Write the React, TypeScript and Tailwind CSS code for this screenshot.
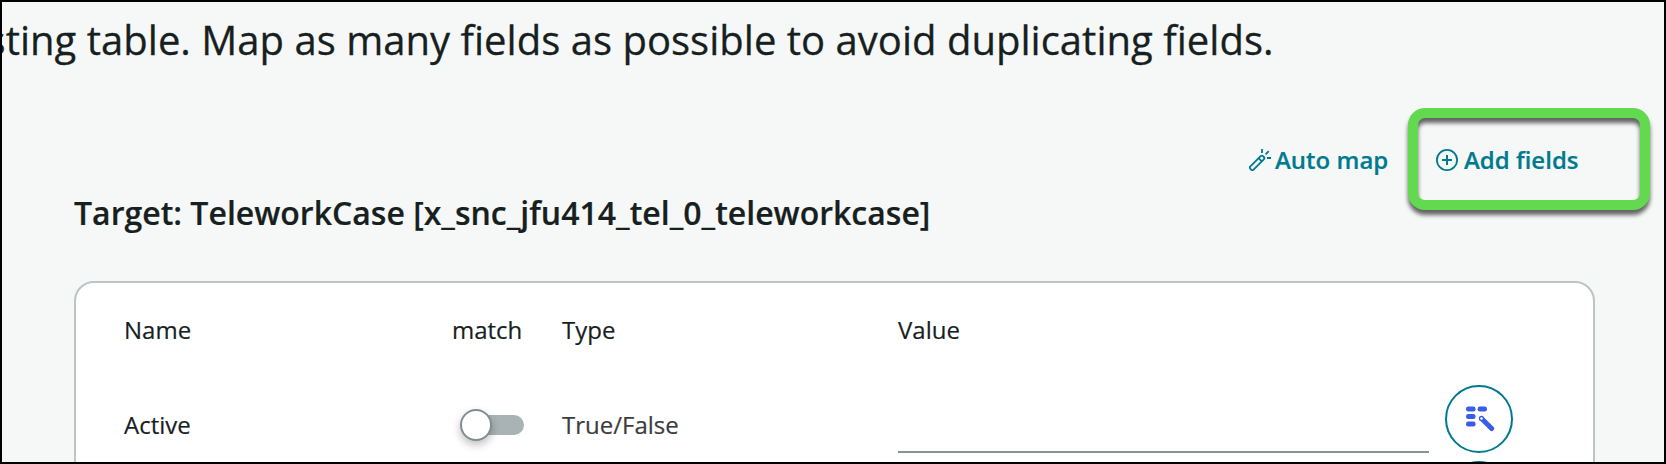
import type { ReactNode } from "react";

function WandIcon() {
  return (
    <svg className="size-[22px] shrink-0" viewBox="0 0 22 22" fill="none" stroke="currentColor" strokeWidth="1.8">
      <path d="M1.4 17.4 11.6 7.2a1.7 1.7 0 0 1 2.4 0l.8.8a1.7 1.7 0 0 1 0 2.4L4.6 20.6a1.7 1.7 0 0 1-2.4 0l-.8-.8a1.7 1.7 0 0 1 0-2.4Z" />
      <path d="m9.6 9.2 3.2 3.2M13 0v4M16.6 5.4l3.2-3.2M18 9h4" />
    </svg>
  );
}

function PlusCircleIcon() {
  return (
    <svg className="size-[22px] shrink-0" viewBox="0 0 22 22" fill="none" stroke="currentColor" strokeWidth="1.8">
      <circle cx="11" cy="11" r="10.1" />
      <path d="M11 6v10M6 11h10" strokeWidth="2" />
    </svg>
  );
}

function MapperIcon() {
  return (
    <svg className="h-[26px] w-[29px]" viewBox="0 0 29 26" fill="#3b5bea">
      <rect x="0" y="0.6" width="9.6" height="5" rx="2.3" />
      <rect x="11.6" y="0.6" width="9.4" height="5" rx="2.3" />
      <rect x="0" y="8.1" width="9.6" height="5" rx="2.3" />
      <rect x="0" y="15.6" width="9.6" height="5" rx="2.3" />
      <path d="M15.8 12.8 25.6 22.6" stroke="#3b5bea" strokeWidth="5" strokeLinecap="round" />
      <circle cx="15.5" cy="12.5" r="2" fill="#fff" stroke="#3b5bea" strokeWidth="1.3" />
    </svg>
  );
}

function Toggle() {
  return (
    <button role="switch" aria-checked={false} className="ml-2 flex h-8 w-16 items-center">
      <span className="z-10 size-8 shrink-0 rounded-full border-2 border-[#7f8e90] bg-white shadow-[0_4px_8px_rgba(0,0,0,0.25)]" />
      <span className="-ml-4 h-5 w-12 shrink-0 rounded-full bg-[#a9b2b4]" />
    </button>
  );
}

function Row({ children, className }: { children: ReactNode; className: string }) {
  return (
    <div className={`grid grid-cols-[328px_110px_336px_531px_68px] leading-8 ${className}`}>{children}</div>
  );
}

function MapperButton() {
  return (
    <button className="col-start-5 ml-4 flex size-[68px] items-center justify-center rounded-full border-2 border-[#007a8e] pl-[2px]">
      <MapperIcon />
    </button>
  );
}

export default function App() {
  return (
    <div className="flex h-[464px] w-[1666px] flex-col overflow-hidden border-2 border-black bg-[#f6f8f8] font-['Open_Sans',sans-serif] text-2xl text-[#181f1f] [-webkit-text-stroke:0.2px]">
      <header className="mt-2 flex h-[60px] w-[1271.5px] shrink-0 justify-end">
        <p className="shrink-0 text-[40px] leading-[60px] tracking-[0.02px] whitespace-nowrap [-webkit-text-stroke:0.3px]">
          sting table. Map as many fields as possible to avoid duplicating fields.
        </p>
      </header>

      <div className="mt-[74px] flex h-8 shrink-0 pl-[1247px] leading-8 font-semibold whitespace-nowrap text-[#007a8e]">
        <button className="flex w-[187px] items-center gap-1">
          <WandIcon />
          Auto map
        </button>
        <button className="relative flex items-center gap-1.5">
          <PlusCircleIcon />
          Add fields
          <span className="pointer-events-none absolute -top-9 -left-7 h-[102px] w-[242px] rounded-[17px] border-10 border-[#62d94e] drop-shadow-[0_5px_2px_rgba(0,0,0,0.6)]" />
        </button>
      </div>

      <h2 className="mt-[13px] h-12 shrink-0 pl-[72px] text-[32px] leading-[48px] font-semibold whitespace-nowrap">
        Target: TeleworkCase [x_snc_jfu414_tel_0_teleworkcase]
      </h2>

      <section className="mt-11 ml-[72px] h-[240px] w-[1521px] shrink-0 rounded-[20px] border-2 border-[#bdc4c6] bg-white pt-[31px] pl-12">
        <Row className="h-8">
          <span>Name</span>
          <span>match</span>
          <span>Type</span>
          <span>Value</span>
        </Row>
        <Row className="mt-[39px] h-[68px]">
          <span className="pt-6">Active</span>
          <span className="pt-6">
            <Toggle />
          </span>
          <span className="pt-6 text-[#3c3c3c]">True/False</span>
          <span className="h-[68px] border-b-2 border-[#859496]" />
          <MapperButton />
        </Row>
        <Row className="mt-2 h-[68px]">
          <MapperButton />
        </Row>
      </section>
    </div>
  );
}
